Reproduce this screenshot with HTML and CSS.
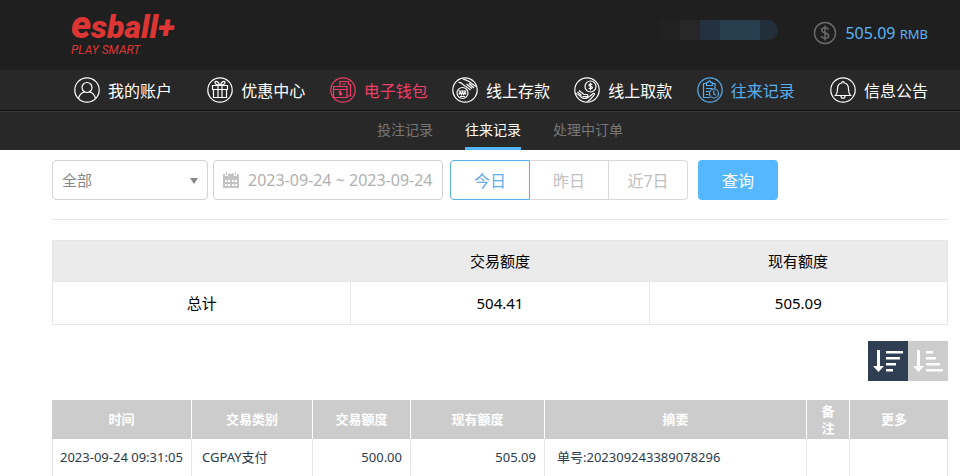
FILE: index.html
```html
<!DOCTYPE html>
<html lang="zh-CN">
<head>
    <meta charset="UTF-8">
    <title>往来记录</title>
    <link rel="stylesheet" href="styles.css">
</head>
<body>
<header class="header">
    <a href="#" class="logo">
        <span class="logo-name"><span class="logo-e">e</span>sball+</span>
        <span class="logo-sub">PLAY SMART</span>
    </a>
    <div class="account">
        <span class="user"></span>
        <svg class="coin" viewBox="0 0 24 24">
            <circle cx="12" cy="12" r="10.5"/>
            <path d="M15.5 8.8C15 7.3 13.800 6.800 12 6.800c-2 0-3.400.9-3.400 2.500 0 3.600 7 1.700 7 5.400 0 1.600-1.500 2.500-3.600 2.500-2 0-3.300-.7-3.700-2.300M12 4.500v15"/>
        </svg>
        <span class="money">505.09 <small>RMB</small></span>
    </div>
</header>
<nav class="nav">
    <ul class="nav-list">
        <li class="first"><a href="#">
            <svg viewBox="0 0 26 26"><circle cx="13" cy="13" r="12.200"/><circle cx="13" cy="10.500" r="5"/><path d="M4.500 21.500c1-4 3.500-6 6-6.500M21.500 21.500c-1-4-3.500-6-6-6.500"/></svg>
            我的账户</a></li>
        <li><a href="#">
            <svg viewBox="0 0 26 26"><circle cx="13" cy="13" r="12.200"/><path d="M5.500 8.500h15v4h-15zM6.500 12.500h13v8h-13zM11 8.500v12M15 8.500v12M12.500 8C10 8 7.500 7 8 5.200S11.800 4.500 12.500 8M13.500 8C16 8 18.500 7 18 5.200S14.200 4.500 13.500 8"/></svg>
            优惠中心</a></li>
        <li class="wallet"><a href="#">
            <svg viewBox="0 0 26 26"><circle cx="13" cy="13" r="12.200"/><path d="M3.500 9.500h13.500v11H3.500zM3.500 12.500h13.500M10 9.500v-5h8.500v3M12.500 7h3.500M18.500 7.500h2v11.500H17M11.500 14.700c-1-.5-2.500-.2-2.300.6.2.9 2.500.6 2.500 1.600 0 .9-1.500 1-2.600.5M10.400 13.800v4.600"/></svg>
            电子钱包</a></li>
        <li><a href="#">
            <svg viewBox="0 0 26 26"><circle cx="13" cy="13" r="12.200"/><circle cx="10.500" cy="16" r="5.500"/><path d="M6.500 14h8M7 17.500l1.200-2.500 1.200 2.500 1.200-2.500 1.200 2.500L13 15l1 2.500M8 19.500h5M6.500 5.500c4-.5 4 3 7.500 4l4.500 3.500M11 2c4 1.500 6 1.500 8.500 4.500l4.500 3M14.500 7l5.500 4.500M17 6.500l5 4.500"/></svg>
            线上存款</a></li>
        <li><a href="#">
            <svg viewBox="0 0 26 26"><circle cx="13" cy="13" r="12.200"/><circle cx="16.500" cy="9.500" r="5.500"/><path d="M18.300 7.700c-1-1-3.500-.8-3.400.6.1 1.500 3.500.8 3.500 2.300 0 1.300-2.600 1.400-3.700.4M16.500 5.800v7.400M5 13.500l5 4h3c1.500.3 1 2.200-.5 2.200H8.500M1.500 16.500c4 0 4.500 4.500 8.500 5 4 .3 6-2.500 9-5 1.500-.7 2 .5 1 1.500-2 2.500-3.500 5-6.500 6.500M3.500 15l4 3.500"/></svg>
            线上取款</a></li>
        <li class="active"><a href="#">
            <svg viewBox="0 0 26 26"><circle cx="13" cy="13" r="12.200"/><path d="M13 20.500H6.500v-14h3M15 6.500h3v5M9.500 8.500v-3h1.500c0-2.200 2.800-2.200 2.800 0h1.500v3zM9 11.500h6.500M9 14.500h3.500M9 17.500h2.500"/><circle cx="17" cy="16.500" r="4.500"/><path d="M16.800 13.500v3.300l2 1.500"/></svg>
            往来记录</a></li>
        <li class="last"><a href="#">
            <svg viewBox="0 0 26 26"><circle cx="13" cy="13" r="12.200"/><path d="M5.500 18.500c2-2 2-3 2-6.500 0-3.200 1.700-5.500 4.200-6 0-1.900 2.600-1.900 2.600 0 2.500.5 4.200 2.800 4.200 6 0 3.500 0 4.500 2 6.500zM11 19c0 3 4 3 4 0"/></svg>
            信息公告</a></li>
    </ul>
</nav>
<nav class="subnav">
    <a href="#">投注记录</a>
    <a href="#" class="active">往来记录</a>
    <a href="#">处理中订单</a>
</nav>
<main class="main">
    <form class="filter">
        <div class="type">
            <select aria-label="类别">
                <option>全部</option>
            </select>
        </div>
        <label class="date">
            <svg viewBox="0 0 18 18">
                <path d="M1 3h2v2h3V3h6v2h3V3h2v4H1zM4 1h1v3H4zM7 2h1v2H7zM10 2h1v2h-1zM13 1h1v3h-1z"/>
                <path fill-rule="evenodd" d="M1 7h16v10H1zM3 9v2h2V9zM6 9v2h2V9zM10 9v2h2V9zM13 9v2h2V9zM3 13v2h2v-2zM6 13v2h2v-2zM10 13v2h2v-2zM13 13v2h2v-2z"/>
            </svg>
            <input type="text" value="2023-09-24 ~ 2023-09-24" aria-label="日期">
        </label>
        <div class="days">
            <button type="button" class="active">今日</button>
            <button type="button">昨日</button>
            <button type="button">近7日</button>
        </div>
        <button type="submit" class="search">查询</button>
    </form>
    <table class="total">
        <thead>
        <tr><th></th><th>交易额度</th><th>现有额度</th></tr>
        </thead>
        <tbody>
        <tr><td>总计</td><td>504.41</td><td>505.09</td></tr>
        </tbody>
    </table>
    <div class="sort">
        <button type="button" class="active" aria-label="降序">
            <svg viewBox="0 0 40 40"><path d="M9 9h3v16h4l-5.500 6L5 25h4zM18 10h17v2.500H18zM18 16h14v2.500H18zM18 22h10v2.500H18zM18 28h7v2.500h-7z"/></svg>
        </button>
        <button type="button" aria-label="升序">
            <svg viewBox="0 0 40 40"><path d="M9 9h3v16h4l-5.500 6L5 25h4zM18 10h7v2.500h-7zM18 16h10v2.500H18zM18 22h14v2.500H18zM18 28h17v2.500H18z"/></svg>
        </button>
    </div>
    <table class="list">
        <colgroup>
            <col class="c-time"><col class="c-type"><col class="c-amount"><col class="c-balance"><col><col class="c-note"><col class="c-more">
        </colgroup>
        <thead>
        <tr><th>时间</th><th>交易类别</th><th>交易额度</th><th>现有额度</th><th>摘要</th><th>备注</th><th class="more">更多</th></tr>
        </thead>
        <tbody>
        <tr>
            <td class="time">2023-09-24 09:31:05</td>
            <td>CGPAY支付</td>
            <td class="num">500.00</td>
            <td class="num">505.09</td>
            <td class="memo">单号:202309243389078296</td>
            <td></td>
            <td></td>
        </tr>
        </tbody>
    </table>
</main>
</body>
</html>
```
FILE: styles.css
```css
*{
    margin: 0;
    padding: 0;
    box-sizing: border-box;
}
body{
    font-family: "Noto Sans", "Noto Sans CJK SC", sans-serif;
    background: #fff;
    color: #000;
}
ul{
    list-style: none;
}
a{
    color: inherit;
    text-decoration: none;
}
button,input,select{
    font-family: inherit;
    font-size: 16px;
}
button{
    cursor: pointer;
}
.header{
    display: flex;
    justify-content: space-between;
    height: 70px;
    padding: 0 32px 0 71px;
    background: #1f1f1f;
}
.logo{
    display: flex;
    flex-direction: column;
    padding-top: 5px;
    font-family: Roboto, sans-serif;
    font-style: italic;
    color: #dc3534;
}
.logo-name{
    height: 38px;
    font-size: 32px;
    font-weight: 900;
    line-height: 41px;
}
.logo-e{
    font-size: 38px;
}
.logo-sub{
    font-size: 12px;
    line-height: 14px;
}
.account{
    display: flex;
    align-items: center;
    height: 66px;
}
.user{
    width: 118px;
    height: 20px;
    margin: 0 35px 6px 0;
    border-radius: 0 10px 10px 0;
    background: linear-gradient(to right, #222 20px, #272727 20px, #272727 40px, #243140 40px, #243140 60px, #283f4f 60px, #283f4f 100px, #222e39 100px);
}
.coin{
    width: 24px;
    height: 24px;
    margin-right: 8px;
    fill: none;
    stroke: #6b6b6b;
    stroke-width: 1.4;
}
.money{
    font-size: 16px;
    color: #5bb5f7;
}
.money small{
    font-size: 13px;
}
.nav{
    height: 41px;
    padding: 0 32px 0 74px;
    background: #282828;
    border-bottom: 1px solid #111;
}
.nav-list{
    display: flex;
    justify-content: space-between;
}
.nav-list .first{
    margin-right: 11px;
}
.nav-list .last{
    margin-left: 11px;
}
.nav-list a{
    display: flex;
    align-items: center;
    gap: 8px;
    height: 40px;
    font-size: 16px;
    color: #fff;
    white-space: nowrap;
}
.nav-list svg{
    width: 26px;
    height: 26px;
    fill: none;
    stroke: currentColor;
    stroke-width: 1.2;
}
.nav-list .wallet a{
    color: #f03e69;
}
.nav-list .active a{
    color: #5aaef0;
}
.subnav{
    display: flex;
    justify-content: center;
    gap: 32px;
    height: 39px;
    padding: 0 12px 0 52px;
    background: #282828;
    border-top: 1px solid #383838;
    font-size: 14px;
    line-height: 36px;
    color: #777;
}
.subnav .active{
    color: #fff;
    border-bottom: 3px solid #52b5fc;
}
.main{
    padding: 10px 12px 0 52px;
}
.filter{
    display: flex;
    height: 60px;
    border-bottom: 1px solid #e6e6e6;
}
.type{
    position: relative;
    width: 156px;
    height: 40px;
    margin-right: 5px;
}
.type select{
    width: 100%;
    height: 100%;
    padding-left: 9px;
    border: 1px solid #d4d4d4;
    border-radius: 4px;
    background: #fff;
    color: #888;
    font-size: 15px;
    appearance: none;
}
.type:after{
    content: "";
    position: absolute;
    right: 10px;
    top: 18px;
    border: 4px solid transparent;
    border-top: 6px solid #888;
    border-bottom: 0;
    pointer-events: none;
}
.date{
    display: flex;
    align-items: center;
    width: 230px;
    height: 40px;
    margin-right: 7px;
    padding-left: 8px;
    border: 1px solid #d4d4d4;
    border-radius: 4px;
}
.date svg{
    flex: none;
    width: 18px;
    height: 18px;
    margin-right: 8px;
    fill: #c4c4c4;
}
.date input{
    flex: 1;
    min-width: 0;
    border: 0;
    outline: 0;
    color: #b0b0b0;
}
.days{
    display: flex;
    width: 238px;
    height: 40px;
    margin-right: 10px;
}
.days button{
    flex: 1;
    border: 1px solid #d9d9d9;
    border-left: 0;
    background: #fff;
    color: #c0c0c0;
}
.days button:last-child{
    border-radius: 0 4px 4px 0;
}
.days .active{
    border: 1px solid #58aeea;
    border-radius: 4px 0 0 4px;
    color: #5eaef0;
}
.search{
    width: 80px;
    height: 40px;
    border: 0;
    border-radius: 4px;
    background: #55b8ff;
    color: #fff;
}
table{
    width: 100%;
    table-layout: fixed;
    border-collapse: collapse;
}
.total{
    margin-top: 20px;
    border: 1px solid #e6e6e6;
    font-size: 15px;
    line-height: 20px;
    text-align: center;
}
.total th{
    height: 41px;
    background: #ebebeb;
    font-weight: normal;
}
.total td{
    height: 43px;
    border: 1px solid #e6e6e6;
}
.sort{
    display: flex;
    justify-content: flex-end;
    margin: 16px 0 19px;
}
.sort button{
    width: 40px;
    height: 40px;
    border: 0;
    background: #ccc;
}
.sort .active{
    background: #2f3e52;
}
.sort svg{
    display: block;
    width: 40px;
    height: 40px;
    fill: #fff;
}
.list{
    border-collapse: separate;
    border-spacing: 0;
    font-size: 13px;
    line-height: 17px;
    color: #2c3a4b;
}
.c-time{
    width: 140px;
}
.c-type{
    width: 121px;
}
.c-amount{
    width: 98px;
}
.c-balance{
    width: 134px;
}
.c-note{
    width: 43px;
}
.c-more{
    width: 98px;
}
.list th{
    height: 39px;
    padding: 0 13px;
    background: #ccc;
    border-right: 1px solid #fff;
    color: #fff;
}
.list .more{
    padding: 0 10px 0 0;
    border-right: 0;
}
.list td{
    height: 37px;
    padding: 0 8px 0 10px;
    border-right: 1px solid #e6e6e6;
    white-space: nowrap;
}
.list td:first-child{
    border-left: 1px solid #e6e6e6;
}
.list .time{
    padding: 0 0 0 7px;
}
.list .num{
    text-align: right;
}
.list .memo{
    padding-left: 12px;
}
```
